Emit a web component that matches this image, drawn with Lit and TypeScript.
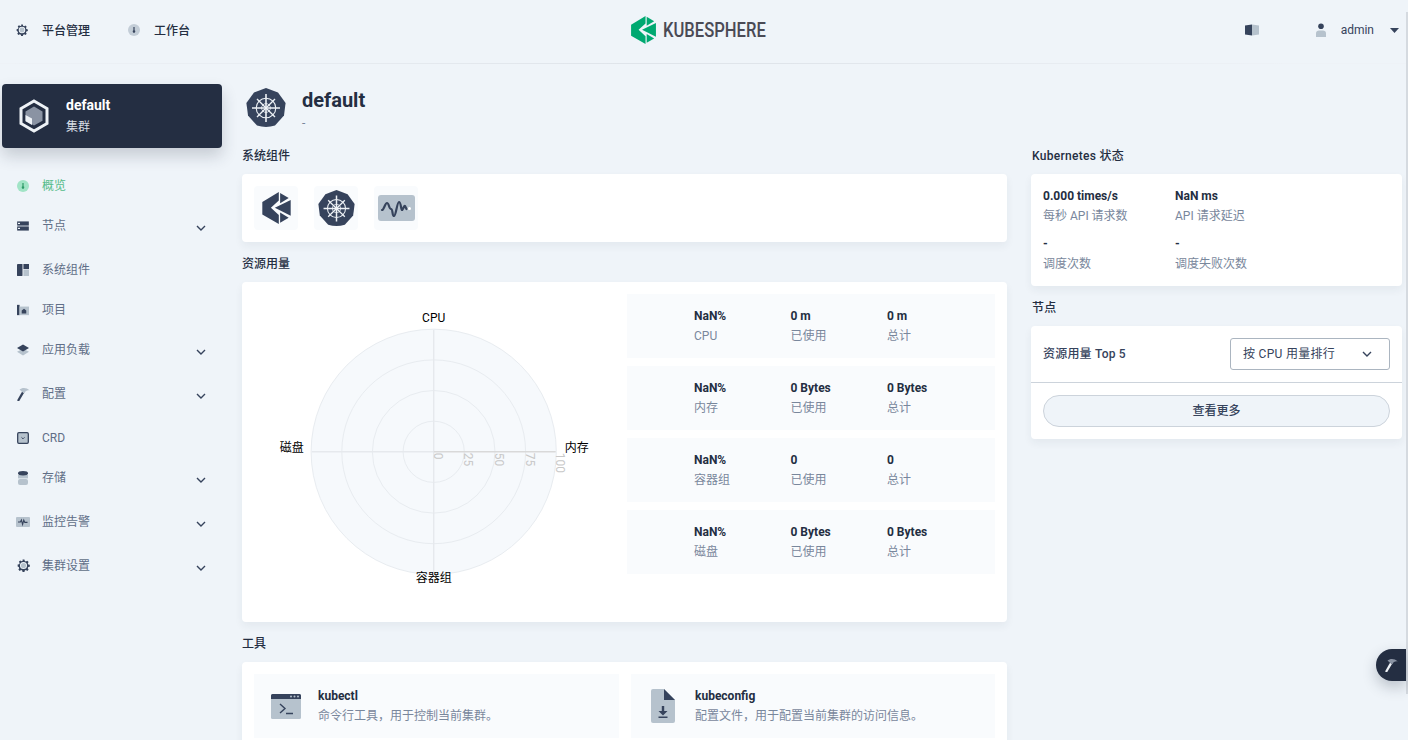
import { LitElement, html, css, svg } from "lit";
import { customElement } from "lit/decorators.js";

const DARK = "#36435c";
const LIGHT = "#b6c2cd";

const heptagon = (size: number) => html`<svg width=${size} height=${size} viewBox="0 0 40 40">
  <path d="M20 0 L32 4.6 L39.6 15 L38 27.6 L29 37.6 Q20 40.4 11 37.6 L2 27.6 L.4 15 L8 4.6 Z" fill="${DARK}"/>
  <g stroke="#eef2f6" fill="none">
    <circle cx="20" cy="20" r="9.8" stroke-width="1.1"/>
    <circle cx="20" cy="20" r="4.4" stroke-width=".8"/>
    <path d="M20 6V34M6 20H34" stroke-width="1.6"/>
    <path d="M11 11L29 29M29 11L11 29" stroke-width="1.4"/>
  </g>
</svg>`;

const kLogo = (w: number, h: number, c: string) => html`<svg width=${w} height=${h} viewBox="0 0 86 97" fill="${c}">
  <path d="M50 0L0 30V68L50 97V70L26 48L50 26Z"/>
  <path d="M54 3L80 18L54 34Z"/>
  <path d="M38 48L86 24V72Z"/>
  <path d="M54 93L80 78L54 62Z"/>
</svg>`;

const gear = html`<svg width="13" height="13" viewBox="0 0 14 14">
  <path fill-rule="evenodd" fill="${DARK}" d="M6 .5h2l.4 1.7 1.2.5 1.5-.9 1.4 1.4-.9 1.5.5 1.2 1.7.4v2l-1.7.4-.5 1.2.9 1.5-1.4 1.4-1.5-.9-1.2.5-.4 1.7H6l-.4-1.7-1.2-.5-1.5.9-1.4-1.4.9-1.5-.5-1.2L.7 8V6l1.7-.4.5-1.2L2 2.9l1.4-1.4 1.5.9 1.2-.5ZM7 3.2a3.8 3.8 0 1 0 0 7.6 3.8 3.8 0 0 0 0-7.6Z"/>
  <circle cx="7" cy="7" r="2.8" fill="${LIGHT}"/>
</svg>`;

const dial = (bg: string, fg: string) => html`<svg width="12" height="12" viewBox="0 0 14 14">
  <circle cx="7" cy="7" r="7" fill="${bg}"/>
  <path d="M6.3 3.4h1.4v4a1.5 1.5 0 1 1-1.4 0Z" fill="${fg}"/>
</svg>`;

const hammer = (h: string, m: string) => html`<svg width="14" height="14" viewBox="0 0 14 14">
  <path d="M1 13.4L6 4.8L8 6L3 14.4Z" fill="${h}"/>
  <path d="M3.5 2.5C6 .5 10 0 14 3.5C11 3 9.5 4 8.5 6.2L5.6 4.5Z" fill="${m}"/>
</svg>`;

const icons: Record<string, unknown> = {
  overview: dial("#a1e4c6", "#2d9a68"),
  node: html`<svg width="12" height="10" viewBox="0 0 14 12">
    <rect y=".5" width="14" height="5" fill="${DARK}"/><rect y="6.5" width="14" height="5" fill="${DARK}"/>
    <rect x="1" y="2.2" width="2.4" height="1.4" fill="#eff4f9"/><rect x="1" y="8.2" width="2.4" height="1.4" fill="#eff4f9"/>
  </svg>`,
  comp: html`<svg width="12" height="12" viewBox="0 0 14 14">
    <rect width="6.4" height="14" fill="${DARK}" rx=".5"/><rect x="7.5" width="6.5" height="6" fill="${DARK}"/><rect x="7.5" y="7" width="6.5" height="7" fill="${LIGHT}"/>
  </svg>`,
  project: html`<svg width="12" height="12" viewBox="0 0 14 14">
    <rect x="0" y="1" width="3" height="12" fill="${DARK}"/><rect x="3" y="3" width="11" height="10" fill="${LIGHT}"/>
    <path d="M5.5 11V7.5L8.2 5.5L10.8 7.5V11Z" fill="${DARK}"/>
  </svg>`,
  app: html`<svg width="12" height="12" viewBox="0 0 14 14">
    <path d="M7 5.5L14 9L7 13.5L0 9Z" fill="${LIGHT}"/><path d="M7 .5L14 4.6L7 8.8L0 4.6Z" fill="${DARK}"/>
  </svg>`,
  config: hammer(DARK, LIGHT),
  crd: html`<svg width="12" height="12" viewBox="0 0 14 14">
    <rect x=".8" y=".8" width="12.4" height="12.4" rx="1.4" fill="${LIGHT}" stroke="${DARK}" stroke-width="1.5"/>
    <path d="M5.2 6.2L7 8L8.8 6.2" fill="none" stroke="${DARK}" stroke-width="1.1"/>
  </svg>`,
  store: html`<svg width="10" height="14" viewBox="0 0 10 14">
    <rect y="8" width="10" height="6" rx="2" fill="${LIGHT}"/><rect y="4" width="10" height="3.4" fill="${LIGHT}"/>
    <ellipse cx="5" cy="2.2" rx="5" ry="2.2" fill="${DARK}"/>
  </svg>`,
  monitor: html`<svg width="14" height="10" viewBox="0 0 14 10">
    <rect width="14" height="10" rx="1" fill="${LIGHT}"/>
    <path d="M2 5H4.4L5.4 3L6.6 7.4L7.8 3.2L8.8 5.4H11.5" fill="none" stroke="${DARK}" stroke-width="1.1"/>
  </svg>`,
  setting: gear,
};

const chevron = html`<svg class="chev" width="12" height="12" viewBox="0 0 12 12"><path d="M2 4L6 8L10 4" fill="none" stroke="${DARK}" stroke-width="1.4"/></svg>`;

const nav: [string, string, boolean, boolean?][] = [
  ["overview", "概览", false, true],
  ["node", "节点", true],
  ["comp", "系统组件", false],
  ["project", "项目", false],
  ["app", "应用负载", true],
  ["config", "配置", true],
  ["crd", "CRD", false],
  ["store", "存储", true],
  ["monitor", "监控告警", true],
  ["setting", "集群设置", true],
];

const resources = [
  ["NaN%", "CPU", "0 m", "0 m"],
  ["NaN%", "内存", "0 Bytes", "0 Bytes"],
  ["NaN%", "容器组", "0", "0"],
  ["NaN%", "磁盘", "0 Bytes", "0 Bytes"],
];

const k8s = [
  ["0.000 times/s", "每秒 API 请求数"],
  ["NaN ms", "API 请求延迟"],
  ["-", "调度次数"],
  ["-", "调度失败次数"],
];

const radar = () => {
  const cx = 179.7, cy = 157.8, rs = [30.6, 61.3, 91.9, 122.6];
  return html`<svg class="radar" width="373" height="316" viewBox="0 0 373 316">
    <circle cx=${cx} cy=${cy} r="122.6" fill="#f6f9fc"/>
    ${rs.map((r) => svg`<circle cx=${cx} cy=${cy} r=${r} fill="none" stroke="#e8ecf0" stroke-width="1"/>`)}
    <path d="M${cx} ${cy - 122}V${cy + 122}M${cx - 122} ${cy}H${cx}" stroke="#e6e9ed" stroke-width="1.4"/>
    <path d="M${cx} ${cy}H${cx + 122}" stroke="#d9d9d9" stroke-width="1.6"/>
    <g class="tick">
      ${[["0", 0], ["25", 30.6], ["50", 61.3], ["75", 91.9], ["100", 122.6]].map(
        ([t, d]) => svg`<text transform="translate(${cx + (d as number)} ${cy + 1}) rotate(90)" x="0" y="0">${t}</text>`
      )}
    </g>
    <g class="axis">
      <text x=${cx} y="28" text-anchor="middle">CPU</text>
      <text x=${cx + 131} y="158">内存</text>
      <text x=${cx} y="288" text-anchor="middle">容器组</text>
      <text x=${cx - 154} y="158">磁盘</text>
    </g>
  </svg>`;
};

@customElement("app-root")
export class AppRoot extends LitElement {
  static styles = css`
    :host {
      display: block;
      position: relative;
      width: 1408px;
      height: 740px;
      overflow: hidden;
      background: #eff4f9;
      color: #242e42;
      font: 12px/20px Roboto, "Noto Sans CJK SC", sans-serif;
    }
    svg { display: block; flex: none; }
    .header {
      height: 63px;
      display: grid;
      grid-template-columns: 1fr auto 1fr;
      align-items: center;
      border-bottom: 1px solid transparent;
      border-image: linear-gradient(90deg, #eef2f7, #dfe4ea 45%, #dfe4ea 55%, #eef2f7 92%) 1;
      box-sizing: content-box;
    }
    .tabs { display: flex; align-items: center; padding: 0 0 1px 16px; }
    .tab { display: flex; align-items: center; gap: 14px; font-weight: 500; margin-right: 38px; }
    .tab svg { width: 12px; height: 12px; margin-top: -2px; }
    .logo { display: flex; align-items: center; gap: 7px; padding-bottom: 3px; margin-right: 11px; }
    .logo-text { font: 500 21px/28px Roboto, sans-serif; color: #4a4a55; transform: scaleX(.79); transform-origin: left; width: 103px; white-space: nowrap; }
    .right { display: flex; align-items: center; justify-content: flex-end; padding: 0 9px 3px 0; color: #36435c; }
    .book { margin-right: 57px; }
    .user { margin-right: 15px; }
    .admin { margin-right: 16px; }
    .body { display: flex; align-items: flex-start; }
    .side { width: 242px; flex: none; padding: 20px 20px 0 2px; box-sizing: border-box; }
    .cluster {
      height: 64px;
      display: flex;
      align-items: center;
      gap: 15px;
      padding-left: 15px;
      background: #242e42;
      color: #fff;
      border-radius: 4px;
      box-shadow: 0 8px 16px rgba(36, 46, 66, .2);
      margin-bottom: 18px;
    }
    .cluster b { display: block; font-weight: 700; font-size: 14px; }
    .cluster span { color: #d8dee5; }
    .cl-text { line-height: 22px; }
    .item { height: 40px; display: flex; align-items: center; padding-left: 14px; color: #5f6e87; }
    .item.sub { margin-bottom: 4px; }
    .item.active { color: #55bc8a; }
    .item .ic { width: 14px; display: flex; justify-content: center; margin-right: 12px; }
    .item .ic svg { margin-top: -1px; }
    .item .lbl { flex: 1; }
    .chev { margin: 4px 15px 0 0; }
    .main { width: 1160px; padding-top: 24px; }
    .title { display: flex; height: 40px; gap: 16px; padding-left: 4px; margin-bottom: 17px; }
    .title h1 { margin: 0; font-size: 20px; line-height: 24px; font-weight: 700; color: #242e42; }
    .title p { margin: 1px 0 0; line-height: 20px; color: #79879c; font-size: 12px; }
    .cols { display: grid; grid-template-columns: 765px 371px; gap: 24px; align-items: start; }
    h2 { margin: 0 0 8px; padding-top: 1px; font-size: 12px; line-height: 20px; font-weight: 500; color: #242e42; }
    h2.wide { letter-spacing: .3px; padding-left: 1px; }
    .card { background: #fff; border-radius: 4px; box-shadow: 0 4px 8px rgba(36, 46, 66, .06); margin-bottom: 11px; }
    .comps { display: flex; gap: 16px; padding: 12px; }
    .comp { width: 44px; height: 44px; background: #f9fbfd; border-radius: 4px; display: flex; align-items: center; justify-content: center; }
    .res { display: grid; grid-template-columns: 373px 368px; padding: 12px 12px 0; height: 340px; box-sizing: border-box; }
    .radar .tick text { font-size: 12px; fill: #c8c8c8; }
    .radar .axis text { font-size: 12px; fill: #000; }
    .rows { display: flex; flex-direction: column; gap: 8px; }
    .row { height: 64px; background: #f9fbfd; display: grid; grid-template-columns: 96.5px 96.5px 1fr; align-items: center; padding-left: 67px; }
    .stat b { display: block; font-weight: 700; color: #242e42; }
    .stat span { color: #79879c; }
    .tools { display: grid; grid-template-columns: 365px 364px; gap: 12px; padding: 12px; height: 120px; box-sizing: border-box; }
    .tool { height: 64px; background: #f9fbfd; display: flex; align-items: center; padding-left: 8px; gap: 8px; }
    .tool .ti { width: 48px; display: flex; justify-content: center; }
    .k8s { display: grid; grid-template-columns: 132px 1fr; gap: 7px 0; padding: 12px; }
    .k8s .stat:nth-child(n + 3) { padding-top: 1px; }
    .nodes { display: flow-root; }
    .nodes-head { height: 56px; display: flex; justify-content: space-between; align-items: center; padding: 0 12px; font-weight: 500; border-bottom: 1px solid #ccd3db; color: #36435c; letter-spacing: .2px; }
    .select { width: 160px; height: 32px; box-sizing: border-box; border: 1px solid #abb5c0; border-radius: 3px; display: flex; align-items: center; justify-content: space-between; padding: 0 16px 0 12px; color: #36435c; font-weight: 400; letter-spacing: .3px; }
    .select .chev { margin: 0; }
    .btn { margin: 12px; height: 32px; box-sizing: border-box; border: 1px solid #ccd3db; border-radius: 16px; background: #eff4f9; display: flex; align-items: center; justify-content: center; font-weight: 500; color: #36435c; }
    .fab {
      position: absolute; left: 1376px; top: 649px; width: 30px; height: 32px;
      background: #242e42; border-radius: 16px 0 0 16px;
      box-shadow: 0 6px 14px rgba(36, 46, 66, .25);
      display: flex; align-items: center; justify-content: center;
    }
    .bar { position: absolute; left: 1406px; top: 12px; width: 2px; height: 682px; background: #d5dae0; }
  `;

  render() {
    return html`
      <div class="header">
        <div class="tabs">
          <div class="tab">${gear}<span>平台管理</span></div>
          <div class="tab">${dial("#c3cdd7", DARK)}<span>工作台</span></div>
        </div>
        <div class="logo">
          ${kLogo(25, 28, "#00a971")}
          <span class="logo-text">KUBESPHERE</span>
        </div>
        <div class="right">
          <svg class="book" width="14" height="12" viewBox="0 0 14 12"><path d="M0 1.5L7 .5V11.5L0 10.5Z" fill="${DARK}"/><path d="M7 .5L14 1.5V10.5L7 11.5Z" fill="${LIGHT}"/></svg>
          <svg class="user" width="10" height="14" viewBox="0 0 10 14"><circle cx="5" cy="3.2" r="2.8" fill="${DARK}"/><path d="M0 14V10.2C0 8.4 1.4 7.4 3 7.4H7C8.6 7.4 10 8.4 10 10.2V14Z" fill="${LIGHT}"/></svg>
          <span class="admin">admin</span>
          <svg width="9" height="5" viewBox="0 0 9 5"><path d="M0 0H9L4.5 5Z" fill="${DARK}"/></svg>
        </div>
      </div>
      <div class="body">
        <aside class="side">
          <div class="cluster">
            <svg width="34" height="34" viewBox="0 0 34 34">
              <path d="M17 2L30 9.5V24.5L17 32L4 24.5V9.5Z" fill="none" stroke="#eef2f6" stroke-width="3"/>
              <path d="M17 7.5L25.5 12.4V21.8L17 26.6L8.5 21.8V12.4Z" fill="#8a93a3"/>
              <path d="M8.5 16L15 19.6V26L8.5 22.3Z" fill="#eef2f6"/>
            </svg>
            <div class="cl-text"><b>default</b><span>集群</span></div>
          </div>
          ${nav.map(
            ([ic, label, sub, active]) => html`<div class="item ${sub ? "sub" : ""} ${active ? "active" : ""}">
              <span class="ic">${icons[ic]}</span><span class="lbl">${label}</span>${sub ? chevron : ""}
            </div>`
          )}
        </aside>
        <main class="main">
          <div class="title">
            ${heptagon(40)}
            <div><h1>default</h1><p>-</p></div>
          </div>
          <div class="cols">
            <div>
              <h2>系统组件</h2>
              <div class="card comps">
                <div class="comp">${kLogo(29, 32, DARK)}</div>
                <div class="comp">${heptagon(37)}</div>
                <div class="comp">
                  <svg width="37" height="26" viewBox="0 0 37 26">
                    <rect width="37" height="26" rx="3" fill="${LIGHT}"/>
                    <path d="M4 15C6 15 7 8 9 8S11 14 13 14S14 21 16 21S19 7 21 7S23 15 24 15S26 10 27 11L28.5 14" fill="none" stroke="${DARK}" stroke-width="2.2" stroke-linecap="round"/>
                    <circle cx="31.5" cy="13.5" r="1.5" fill="#fff"/>
                  </svg>
                </div>
              </div>
              <h2>资源用量</h2>
              <div class="card res">
                ${radar()}
                <div class="rows">
                  ${resources.map(
                    (r) => html`<div class="row">
                      <div class="stat"><b>${r[0]}</b><span>${r[1]}</span></div>
                      <div class="stat"><b>${r[2]}</b><span>已使用</span></div>
                      <div class="stat"><b>${r[3]}</b><span>总计</span></div>
                    </div>`
                  )}
                </div>
              </div>
              <h2>工具</h2>
              <div class="card tools">
                <div class="tool">
                  <span class="ti"><svg width="30" height="25" viewBox="0 0 30 25">
                    <rect width="30" height="25" rx="1.5" fill="${LIGHT}"/>
                    <path d="M0 1.5A1.5 1.5 0 0 1 1.5 0H28.5A1.5 1.5 0 0 1 30 1.5V5H0Z" fill="${DARK}"/>
                    <circle cx="20" cy="2.5" r="1" fill="${LIGHT}"/><circle cx="23.5" cy="2.5" r="1" fill="${LIGHT}"/><circle cx="27" cy="2.5" r="1" fill="${LIGHT}"/>
                    <path d="M9 10L14 14.5L9 19M15 19.5H22" fill="none" stroke="${DARK}" stroke-width="1.4"/>
                  </svg></span>
                  <div class="stat"><b>kubectl</b><span>命令行工具，用于控制当前集群。</span></div>
                </div>
                <div class="tool">
                  <span class="ti"><svg width="24" height="34" viewBox="0 0 24 34">
                    <path d="M2 0H13L24 11V32A2 2 0 0 1 22 34H2A2 2 0 0 1 0 32V2A2 2 0 0 1 2 0Z" fill="${LIGHT}"/>
                    <path d="M13 0L24 11H13Z" fill="${DARK}"/>
                    <path d="M10.8 17H13.2V22H16.5L12 26.5L7.5 22H10.8ZM7.5 27.5H16.5V29H7.5Z" fill="${DARK}"/>
                  </svg></span>
                  <div class="stat"><b>kubeconfig</b><span>配置文件，用于配置当前集群的访问信息。</span></div>
                </div>
              </div>
            </div>
            <div>
              <h2 class="wide">Kubernetes 状态</h2>
              <div class="card k8s">
                ${k8s.map((s) => html`<div class="stat"><b>${s[0]}</b><span>${s[1]}</span></div>`)}
              </div>
              <h2 class="wide">节点</h2>
              <div class="card nodes">
                <div class="nodes-head">
                  <span>资源用量 Top 5</span>
                  <div class="select"><span>按 CPU 用量排行</span>${chevron}</div>
                </div>
                <div class="btn">查看更多</div>
              </div>
            </div>
          </div>
        </main>
      </div>
      <div class="bar"></div>
      <div class="fab">${hammer("#eef2f6", "#8a93a3")}</div>
    `;
  }
}
